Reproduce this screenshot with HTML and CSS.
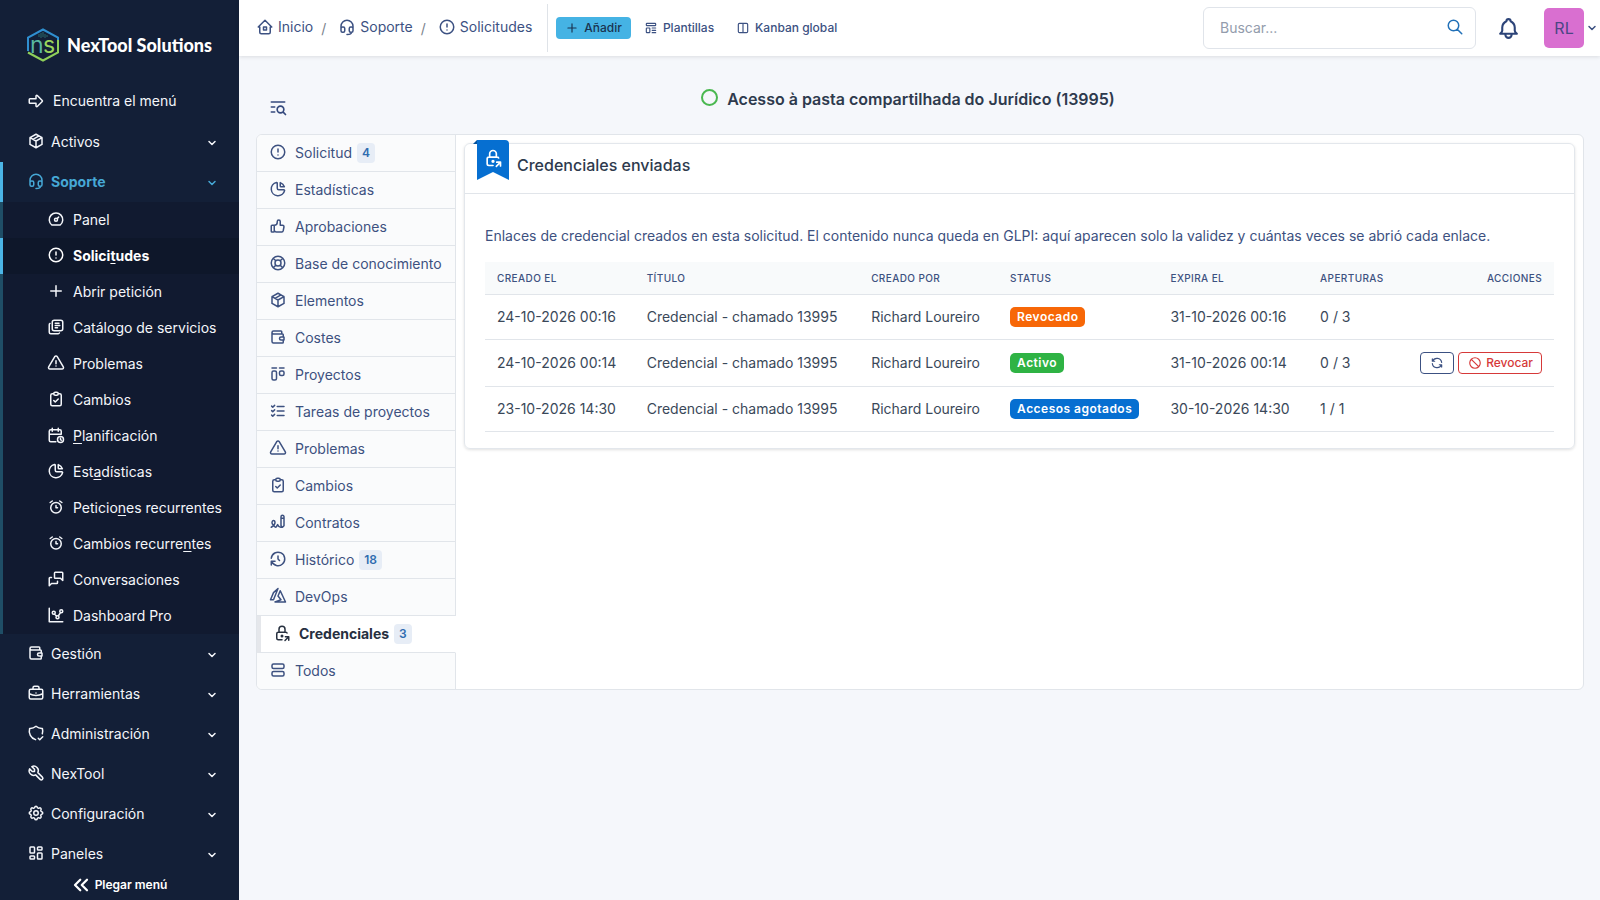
FILE: index.html
```html
<!DOCTYPE html>
<html lang="es">
<head>
<meta charset="utf-8">
<meta name="viewport" content="width=device-width, initial-scale=1">
<title>Acesso à pasta compartilhada do Jurídico (13995)</title>
<link rel="stylesheet" href="styles.css">
</head>
<body>
<svg class="sprite" aria-hidden="true">
  <symbol id="arrow" viewBox="0 0 24 24"><path d="M4 9h8v-3.586a1 1 0 0 1 1.707-.707l6.586 6.586a1 1 0 0 1 0 1.414l-6.586 6.586a1 1 0 0 1-1.707-.707v-3.586h-8a1 1 0 0 1-1-1v-4a1 1 0 0 1 1-1z"/></symbol>
  <symbol id="package" viewBox="0 0 24 24"><path d="M12 3l8 4.5v9l-8 4.5l-8-4.5v-9l8-4.5M12 12l8-4.5M12 12v9M12 12l-8-4.5M16 5.25l-8 4.5"/></symbol>
  <symbol id="headset" viewBox="0 0 24 24"><path d="M4 14v-3a8 8 0 1 1 16 0v3M18 19c0 1.657-2.686 3-6 3M4 14a2 2 0 0 1 2-2h1a2 2 0 0 1 2 2v3a2 2 0 0 1-2 2h-1a2 2 0 0 1-2-2v-3zM15 14a2 2 0 0 1 2-2h1a2 2 0 0 1 2 2v3a2 2 0 0 1-2 2h-1a2 2 0 0 1-2-2v-3z"/></symbol>
  <symbol id="gauge" viewBox="0 0 24 24"><path d="M10 13a2 2 0 1 0 4 0a2 2 0 1 0-4 0M13.45 11.55l2.05-2.05M6.4 20a9 9 0 1 1 11.2 0z"/></symbol>
  <symbol id="alert" viewBox="0 0 24 24"><path d="M3 12a9 9 0 1 0 18 0a9 9 0 0 0-18 0M12 8v4M12 16h.01"/></symbol>
  <symbol id="plus" viewBox="0 0 24 24"><path d="M12 5v14M5 12h14"/></symbol>
  <symbol id="library" viewBox="0 0 24 24"><path d="M7 5.667a2.667 2.667 0 0 1 2.667-2.667h8.666a2.667 2.667 0 0 1 2.667 2.667v8.666a2.667 2.667 0 0 1-2.667 2.667h-8.666a2.667 2.667 0 0 1-2.667-2.667zM4.012 7.26a2.005 2.005 0 0 0-1.012 1.737v10c0 1.1.9 2 2 2h10c.75 0 1.158-.385 1.5-1M11 7h5M11 10h6M11 13h3"/></symbol>
  <symbol id="triangle" viewBox="0 0 24 24"><path d="M12 9v4M10.363 3.591l-8.106 13.534a1.914 1.914 0 0 0 1.636 2.871h16.214a1.914 1.914 0 0 0 1.636-2.87l-8.106-13.536a1.914 1.914 0 0 0-3.274 0zM12 16h.01"/></symbol>
  <symbol id="clipboard" viewBox="0 0 24 24"><path d="M9 5h-2a2 2 0 0 0-2 2v12a2 2 0 0 0 2 2h10a2 2 0 0 0 2-2v-12a2 2 0 0 0-2-2h-2M9 5a2 2 0 0 1 2-2h2a2 2 0 0 1 2 2a2 2 0 0 1-2 2h-2a2 2 0 0 1-2-2zM9 14l2 2l4-4"/></symbol>
  <symbol id="calendar" viewBox="0 0 24 24"><path d="M11.795 21h-6.795a2 2 0 0 1-2-2v-12a2 2 0 0 1 2-2h12a2 2 0 0 1 2 2v4M14 18a4 4 0 1 0 8 0a4 4 0 1 0-8 0M15 3v4M7 3v4M3 11h16M18 16.496v1.504l1 1"/></symbol>
  <symbol id="pie" viewBox="0 0 24 24"><path d="M10 3.2a9 9 0 1 0 10.8 10.8a1 1 0 0 0-1-1h-6.8a2 2 0 0 1-2-2v-7a.9.9 0 0 0-1-.8M15 3.5a9 9 0 0 1 5.5 5.5h-4.5a1 1 0 0 1-1-1v-4.5"/></symbol>
  <symbol id="alarm" viewBox="0 0 24 24"><path d="M5 13a7 7 0 1 0 14 0a7 7 0 1 0-14 0M12 10v3h2M7 4l-2.75 2M17 4l2.75 2"/></symbol>
  <symbol id="messages" viewBox="0 0 24 24"><path d="M21 14l-3-3h-7a1 1 0 0 1-1-1v-6a1 1 0 0 1 1-1h9a1 1 0 0 1 1 1v10M14 15v2a1 1 0 0 1-1 1h-7l-3 3v-10a1 1 0 0 1 1-1h2"/></symbol>
  <symbol id="chart" viewBox="0 0 24 24"><path d="M3 3v18h18M7 9a2 2 0 1 0 4 0a2 2 0 1 0-4 0M17 7a2 2 0 1 0 4 0a2 2 0 1 0-4 0M12 15a2 2 0 1 0 4 0a2 2 0 1 0-4 0M10.16 10.62l2.34 2.88M15.088 13.328l2.837-4.586"/></symbol>
  <symbol id="wallet" viewBox="0 0 24 24"><path d="M17 8v-3a1 1 0 0 0-1-1h-10a2 2 0 0 0 0 4h12a1 1 0 0 1 1 1v3m0 4v3a1 1 0 0 1-1 1h-12a2 2 0 0 1-2-2v-12M20 12v4h-4a2 2 0 0 1 0-4h4"/></symbol>
  <symbol id="briefcase" viewBox="0 0 24 24"><path d="M3 9a2 2 0 0 1 2-2h14a2 2 0 0 1 2 2v9a2 2 0 0 1-2 2h-14a2 2 0 0 1-2-2zM8 7v-2a2 2 0 0 1 2-2h4a2 2 0 0 1 2 2v2M12 12v.01M3 13a20 20 0 0 0 18 0"/></symbol>
  <symbol id="shield" viewBox="0 0 24 24"><path d="M11.46 20.846a12 12 0 0 1-7.96-14.846a12 12 0 0 0 8.5-3a12 12 0 0 0 8.5 3a12 12 0 0 1-.09 7.06M15 19l2 2l4-4"/></symbol>
  <symbol id="tool" viewBox="0 0 24 24"><path d="M7 10h3v-3l-3.5-3.5a6 6 0 0 1 8 8l6 6a2 2 0 0 1-3 3l-6-6a6 6 0 0 1-8-8l3.5 3.5"/></symbol>
  <symbol id="gear" viewBox="0 0 24 24"><path d="M10.325 4.317c.426-1.756 2.924-1.756 3.35 0a1.724 1.724 0 0 0 2.573 1.066c1.543-.94 3.31.826 2.37 2.37a1.724 1.724 0 0 0 1.065 2.572c1.756.426 1.756 2.924 0 3.35a1.724 1.724 0 0 0-1.066 2.573c.94 1.543-.826 3.31-2.37 2.37a1.724 1.724 0 0 0-2.572 1.065c-.426 1.756-2.924 1.756-3.35 0a1.724 1.724 0 0 0-2.573-1.066c-1.543.94-3.31-.826-2.37-2.37a1.724 1.724 0 0 0-1.065-2.572c-1.756-.426-1.756-2.924 0-3.35a1.724 1.724 0 0 0 1.066-2.573c-.94-1.543.826-3.31 2.37-2.37c1 .608 2.296.07 2.572-1.065zM9 12a3 3 0 1 0 6 0a3 3 0 0 0-6 0"/></symbol>
  <symbol id="panels" viewBox="0 0 24 24"><path d="M5 4h4a1 1 0 0 1 1 1v6a1 1 0 0 1-1 1h-4a1 1 0 0 1-1-1v-6a1 1 0 0 1 1-1M5 16h4a1 1 0 0 1 1 1v2a1 1 0 0 1-1 1h-4a1 1 0 0 1-1-1v-2a1 1 0 0 1 1-1M15 12h4a1 1 0 0 1 1 1v6a1 1 0 0 1-1 1h-4a1 1 0 0 1-1-1v-6a1 1 0 0 1 1-1M15 4h4a1 1 0 0 1 1 1v2a1 1 0 0 1-1 1h-4a1 1 0 0 1-1-1v-2a1 1 0 0 1 1-1"/></symbol>
  <symbol id="collapse" viewBox="0 0 24 24"><path d="M11 5l-7 7l7 7M20 5l-7 7l7 7"/></symbol>
  <symbol id="down" viewBox="0 0 24 24"><path d="M6 9l6 6l6-6"/></symbol>
  <symbol id="home" viewBox="0 0 24 24"><path d="M5 12h-2l9-9l9 9h-2M5 12v7a2 2 0 0 0 2 2h10a2 2 0 0 0 2-2v-7M10 12h4v4h-4z"/></symbol>
  <symbol id="template" viewBox="0 0 24 24"><path d="M4 5a1 1 0 0 1 1-1h14a1 1 0 0 1 1 1v2a1 1 0 0 1-1 1h-14a1 1 0 0 1-1-1zM4 13a1 1 0 0 1 1-1h4a1 1 0 0 1 1 1v6a1 1 0 0 1-1 1h-4a1 1 0 0 1-1-1zM14 12h6M14 16h6M14 20h6"/></symbol>
  <symbol id="columns" viewBox="0 0 24 24"><path d="M4 6a2 2 0 0 1 2-2h12a2 2 0 0 1 2 2v12a2 2 0 0 1-2 2h-12a2 2 0 0 1-2-2zM12 4v16"/></symbol>
  <symbol id="listsearch" viewBox="0 0 24 24"><path d="M11 15a4 4 0 1 0 8 0a4 4 0 1 0-8 0M18.5 18.5l2.5 2.5M4 6h16M4 12h4M4 18h4"/></symbol>
  <symbol id="thumb" viewBox="0 0 24 24"><path d="M7 11v8a1 1 0 0 1-1 1h-2a1 1 0 0 1-1-1v-7a1 1 0 0 1 1-1h3a4 4 0 0 0 4-4v-1a2 2 0 0 1 4 0v5h3a2 2 0 0 1 2 2l-1 5a2 3 0 0 1-2 2h-7a3 3 0 0 1-3-3"/></symbol>
  <symbol id="lifebuoy" viewBox="0 0 24 24"><path d="M8 12a4 4 0 1 0 8 0a4 4 0 1 0-8 0M3 12a9 9 0 1 0 18 0a9 9 0 1 0-18 0M15 15l3.35 3.35M9 15l-3.35 3.35M5.65 5.65l3.35 3.35M18.35 5.65l-3.35 3.35"/></symbol>
  <symbol id="kanban" viewBox="0 0 24 24"><path d="M4 4h6M14 4h6M4 10a2 2 0 0 1 2-2h2a2 2 0 0 1 2 2v8a2 2 0 0 1-2 2h-2a2 2 0 0 1-2-2zM14 10a2 2 0 0 1 2-2h2a2 2 0 0 1 2 2v2a2 2 0 0 1-2 2h-2a2 2 0 0 1-2-2z"/></symbol>
  <symbol id="listcheck" viewBox="0 0 24 24"><path d="M3.5 5.5l1.5 1.5l2.5-2.5M3.5 11.5l1.5 1.5l2.5-2.5M3.5 17.5l1.5 1.5l2.5-2.5M11 6h9M11 12h9M11 18h9"/></symbol>
  <symbol id="sign" viewBox="0 0 24 24"><path d="M3 19c3.333-2 5-4 5-6c0-3-1-3-2-3s-2.032 1.085-2 3c.034 2.048 1.658 2.877 2.5 4c1.5 2 2.5 2.5 3.5 1c.667-1 1.167-1.833 1.5-2.5c1 2.333 2.333 3.5 4 3.5h2.5M20 17v-12c0-1.121-.879-2-2-2s-2 .879-2 2v12l2 2l2-2zM16 7h4"/></symbol>
  <symbol id="history" viewBox="0 0 24 24"><path d="M12 8v4l2 2M3.05 11a9 9 0 1 1 .5 4m-.5 5v-5h5"/></symbol>
  <symbol id="azure" viewBox="0 0 24 24"><path d="M6 7.5l-4 9.5h4l6-15zM22 20l-7-15l-3 7l4 5l-8 3z"/></symbol>
  <symbol id="lockshare" viewBox="0 0 24 24"><path d="M12 21h-5a2 2 0 0 1-2-2v-6a2 2 0 0 1 2-2h10c.7 0 1.4.4 1.7 1M8 11v-4a4 4 0 1 1 8 0v4M11 16a1 1 0 1 0 2 0a1 1 0 1 0-2 0M16 22l5-5M21 21.5v-4.5h-4.5"/></symbol>
  <symbol id="rows" viewBox="0 0 24 24"><path d="M4 6a2 2 0 0 1 2-2h12a2 2 0 0 1 2 2v2a2 2 0 0 1-2 2h-12a2 2 0 0 1-2-2zM4 16a2 2 0 0 1 2-2h12a2 2 0 0 1 2 2v2a2 2 0 0 1-2 2h-12a2 2 0 0 1-2-2z"/></symbol>
  <symbol id="search" viewBox="0 0 24 24"><path d="M3 10a7 7 0 1 0 14 0a7 7 0 1 0-14 0M21 21l-6-6"/></symbol>
  <symbol id="bell" viewBox="0 0 24 24"><path d="M10 5a2 2 0 1 1 4 0a7 7 0 0 1 4 6v3a4 4 0 0 0 2 3h-16a4 4 0 0 0 2-3v-3a7 7 0 0 1 4-6M9 17v1a3 3 0 0 0 6 0v-1"/></symbol>
  <symbol id="refresh" viewBox="0 0 24 24"><path d="M20 11a8.1 8.1 0 0 0-15.5-2m-.5-4v4h4M4 13a8.1 8.1 0 0 0 15.5 2m.5 4v-4h-4"/></symbol>
  <symbol id="ban" viewBox="0 0 24 24"><path d="M3 12a9 9 0 1 0 18 0a9 9 0 1 0-18 0M5.7 5.7l12.6 12.6"/></symbol>
</svg>
<div class="app">
  <aside class="sidebar">
    <a class="brand" href="#">
      <svg class="brand-mark" viewBox="0 0 34 34" aria-hidden="true">
        <path class="hex-top" d="M2 23V9.500L17 1.500L32 9.500V12"/>
        <path class="hex-bottom" d="M2 24.500L17 32.500L32 24.500V12"/>
        <path class="circuit" d="M13 9V6M15 10V5M17 9V4M19 10V6M21 9V7"/>
        <text class="brand-n" x="4" y="25">n</text><text class="brand-s" x="17" y="25">s</text>
      </svg>
      <span class="brand-name">NexTool Solutions</span>
    </a>
    <button class="find" type="button"><svg class="icon"><use href="#arrow"/></svg>Encuentra el menú</button>
    <nav class="menu">
      <button class="menu-item" type="button"><svg class="icon"><use href="#package"/></svg><span>Activos</span><svg class="caret"><use href="#down"/></svg></button>
      <button class="menu-item open" type="button"><svg class="icon"><use href="#headset"/></svg><span>Soporte</span><svg class="caret"><use href="#down"/></svg></button>
      <div class="submenu">
        <a href="#"><svg class="icon"><use href="#gauge"/></svg><span>Panel</span></a>
        <a class="current" href="#"><svg class="icon"><use href="#alert"/></svg><span>Solici<u>t</u>udes</span></a>
        <a href="#"><svg class="icon"><use href="#plus"/></svg><span>Abrir petición</span></a>
        <a href="#"><svg class="icon"><use href="#library"/></svg><span>Catálogo de servicios</span></a>
        <a href="#"><svg class="icon"><use href="#triangle"/></svg><span>Problemas</span></a>
        <a href="#"><svg class="icon"><use href="#clipboard"/></svg><span>Cambios</span></a>
        <a href="#"><svg class="icon"><use href="#calendar"/></svg><span><u>P</u>lanificación</span></a>
        <a href="#"><svg class="icon"><use href="#pie"/></svg><span>Est<u>a</u>dísticas</span></a>
        <a href="#"><svg class="icon"><use href="#alarm"/></svg><span>Peticio<u>n</u>es recurrentes</span></a>
        <a href="#"><svg class="icon"><use href="#alarm"/></svg><span>Cambios recurre<u>n</u>tes</span></a>
        <a href="#"><svg class="icon"><use href="#messages"/></svg><span>Conversaciones</span></a>
        <a href="#"><svg class="icon"><use href="#chart"/></svg><span>Dashboard Pro</span></a>
      </div>
      <button class="menu-item" type="button"><svg class="icon"><use href="#wallet"/></svg><span>Gestión</span><svg class="caret"><use href="#down"/></svg></button>
      <button class="menu-item" type="button"><svg class="icon"><use href="#briefcase"/></svg><span>Herramientas</span><svg class="caret"><use href="#down"/></svg></button>
      <button class="menu-item" type="button"><svg class="icon"><use href="#shield"/></svg><span>Administración</span><svg class="caret"><use href="#down"/></svg></button>
      <button class="menu-item" type="button"><svg class="icon"><use href="#tool"/></svg><span>NexTool</span><svg class="caret"><use href="#down"/></svg></button>
      <button class="menu-item" type="button"><svg class="icon"><use href="#gear"/></svg><span>Configuración</span><svg class="caret"><use href="#down"/></svg></button>
      <button class="menu-item" type="button"><svg class="icon"><use href="#panels"/></svg><span>Paneles</span><svg class="caret"><use href="#down"/></svg></button>
    </nav>
    <button class="fold" type="button"><svg class="icon"><use href="#collapse"/></svg>Plegar menú</button>
  </aside>

  <div class="page">
    <header class="topbar">
      <nav class="crumbs" aria-label="Ruta">
        <a href="#"><svg class="icon"><use href="#home"/></svg>Inicio</a><span class="slash">/</span>
        <a href="#"><svg class="icon"><use href="#headset"/></svg>Soporte</a><span class="slash">/</span>
        <a href="#"><svg class="icon"><use href="#alert"/></svg>Solicitudes</a>
      </nav>
      <div class="actions">
        <a class="action primary" href="#"><svg class="icon small"><use href="#plus"/></svg>Añadir</a>
        <a class="action" href="#"><svg class="icon small"><use href="#template"/></svg>Plantillas</a>
        <a class="action" href="#"><svg class="icon small"><use href="#columns"/></svg>Kanban global</a>
      </div>
      <form class="search">
        <input type="search" placeholder="Buscar..." aria-label="Buscar">
        <button type="button" aria-label="Buscar"><svg class="icon"><use href="#search"/></svg></button>
      </form>
      <button class="bell" type="button" aria-label="Notificaciones"><svg class="icon"><use href="#bell"/></svg></button>
      <button class="user" type="button"><span class="avatar">RL</span><svg class="caret"><use href="#down"/></svg></button>
    </header>

    <main class="content">
      <div class="heading">
        <button class="list-toggle" type="button" aria-label="Mostrar lista"><svg class="icon"><use href="#listsearch"/></svg></button>
        <h1><span class="status-dot"></span>Acesso à pasta compartilhada do Jurídico (13995)</h1>
      </div>
      <div class="panel">
        <nav class="tabs">
          <a href="#"><svg class="icon"><use href="#alert"/></svg>Solicitud<span class="count">4</span></a>
          <a href="#"><svg class="icon"><use href="#pie"/></svg>Estadísticas</a>
          <a href="#"><svg class="icon"><use href="#thumb"/></svg>Aprobaciones</a>
          <a href="#"><svg class="icon"><use href="#lifebuoy"/></svg>Base de conocimiento</a>
          <a href="#"><svg class="icon"><use href="#package"/></svg>Elementos</a>
          <a href="#"><svg class="icon"><use href="#wallet"/></svg>Costes</a>
          <a href="#"><svg class="icon"><use href="#kanban"/></svg>Proyectos</a>
          <a href="#"><svg class="icon"><use href="#listcheck"/></svg>Tareas de proyectos</a>
          <a href="#"><svg class="icon"><use href="#triangle"/></svg>Problemas</a>
          <a href="#"><svg class="icon"><use href="#clipboard"/></svg>Cambios</a>
          <a href="#"><svg class="icon"><use href="#sign"/></svg>Contratos</a>
          <a href="#"><svg class="icon"><use href="#history"/></svg>Histórico<span class="count">18</span></a>
          <a href="#"><svg class="icon"><use href="#azure"/></svg>DevOps</a>
          <a class="current" href="#"><svg class="icon"><use href="#lockshare"/></svg>Credenciales<span class="count">3</span></a>
          <a href="#"><svg class="icon"><use href="#rows"/></svg>Todos</a>
        </nav>
        <div class="tab-body">
          <section class="card">
            <div class="ribbon"><svg class="icon"><use href="#lockshare"/></svg></div>
            <h2>Credenciales enviadas</h2>
            <div class="card-body">
              <p>Enlaces de credencial creados en esta solicitud. El contenido nunca queda en GLPI: aquí aparecen solo la validez y cuántas veces se abrió cada enlace.</p>
              <table>
                <colgroup><col class="c-date"><col class="c-title"><col class="c-author"><col class="c-status"><col class="c-date"><col class="c-opens"><col></colgroup>
                <thead>
                  <tr><th>Creado el</th><th>Título</th><th>Creado por</th><th>Status</th><th>Expira el</th><th>Aperturas</th><th class="end">Acciones</th></tr>
                </thead>
                <tbody>
                  <tr><td>24-10-2026 00:16</td><td>Credencial - chamado 13995</td><td>Richard Loureiro</td><td><span class="badge orange">Revocado</span></td><td>31-10-2026 00:16</td><td>0 / 3</td><td></td></tr>
                  <tr><td>24-10-2026 00:14</td><td>Credencial - chamado 13995</td><td>Richard Loureiro</td><td><span class="badge green">Activo</span></td><td>31-10-2026 00:14</td><td>0 / 3</td>
                    <td><div class="row-actions"><button class="btn" type="button" aria-label="Renovar"><svg class="icon small"><use href="#refresh"/></svg></button><button class="btn danger" type="button"><svg class="icon small"><use href="#ban"/></svg>Revocar</button></div></td></tr>
                  <tr><td>23-10-2026 14:30</td><td>Credencial - chamado 13995</td><td>Richard Loureiro</td><td><span class="badge blue">Accesos agotados</span></td><td>30-10-2026 14:30</td><td>1 / 1</td><td></td></tr>
                </tbody>
              </table>
            </div>
          </section>
        </div>
      </div>
    </main>
  </div>
</div>
</body>
</html>
```
FILE: styles.css
```css
* { box-sizing: border-box; }
body {
  margin: 0;
  background: #f5f7fb;
  color: #3a4859;
  font: 400 14px/20px Inter, "Liberation Sans", sans-serif;
}
a { color: inherit; text-decoration: none; }
button { margin: 0; padding: 0; border: 0; background: none; color: inherit; font: inherit; cursor: pointer; }
h1, h2, p { margin: 0; }
.sprite { display: none; }
.icon, .caret {
  flex: none;
  width: 18px;
  height: 18px;
  fill: none;
  stroke: currentColor;
  stroke-width: 2;
  stroke-linecap: round;
  stroke-linejoin: round;
}
.icon.small { width: 14px; height: 14px; }
.caret { width: 12px; height: 12px; stroke-width: 3; }

.app { display: flex; min-height: 100vh; }

.sidebar {
  flex: none;
  display: flex;
  flex-direction: column;
  width: 239px;
  background: #131f37;
  color: #f4f6fa;
}
.brand { display: flex; align-items: center; gap: 7px; padding: 28px 0 0 26px; }
.brand-mark { width: 34px; height: 34px; fill: none; stroke-width: 2; }
.hex-top { stroke: #2f8fd0; }
.hex-bottom { stroke: #8fd05a; }
.circuit { stroke: #2b6a6c; stroke-width: 1; }
.brand-mark text { font: 400 23px Inter, sans-serif; }
.brand-n { fill: #58b8a0; }
.brand-s { fill: #9bd65c; }
.brand-name { color: #fff; font: 900 18px/24px Lato, sans-serif; white-space: nowrap; }
.find { display: flex; align-items: center; gap: 8px; height: 38px; margin: 20px 0 2px; padding-left: 27px; }
.menu .icon { margin-bottom: 2px; }
.menu-item { display: flex; align-items: center; gap: 6px; width: 100%; height: 40px; padding: 0 21px 0 27px; text-align: left; }
.menu-item span { flex: 1; }
.menu-item .caret { margin-top: 2px; }
.menu-item.open { border-left: 3px solid #4bb5e6; padding-left: 24px; color: #46a8d6; font-weight: 700; }
.submenu { background: #111a30; }
.submenu a { display: flex; align-items: center; gap: 8px; height: 36px; padding-left: 44px; border-left: 3px solid #1f4e66; white-space: nowrap; }
.submenu .current { border-left-color: #4bb5e6; background: #0e172a; color: #fff; font-weight: 700; }
u { text-underline-offset: 2px; }
.fold { display: flex; align-items: center; justify-content: center; gap: 5px; height: 22px; color: #fff; font-size: 12px; font-weight: 600; }
.fold .icon { stroke-width: 3; }

.page { flex: 1; min-width: 0; }
.topbar {
  display: flex;
  align-items: center;
  height: 56px;
  padding: 0 2px 0 17px;
  background: #fff;
  box-shadow: 0 1px 4px #0000001c;
  color: #3c5182;
}
.crumbs { display: flex; align-items: center; white-space: nowrap; }
.crumbs a { display: flex; align-items: center; gap: 4px; padding-bottom: 2px; }
.slash { padding: 2px 12px 0 8px; color: #7b828c; }
.actions { display: flex; align-items: center; gap: 4px; height: 48px; margin-left: 15px; padding-left: 8px; border-left: 1px solid #dfe3e8; }
.action { display: flex; align-items: center; gap: 5px; height: 22px; padding: 0 9px; border-radius: 4px; font-size: 12px; font-weight: 500; white-space: nowrap; }
.action.primary { background: #45b3e4; color: #1a3350; }
.search { display: flex; align-items: center; width: 273px; height: 42px; margin-left: auto; padding: 0 11px 0 16px; border: 1px solid #e0e4ea; border-radius: 6px; }
.search input { flex: 1; min-width: 0; padding: 0; border: 0; outline: 0; background: none; color: inherit; font: inherit; }
.search input::placeholder { color: #939cac; }
.search button { display: flex; padding-bottom: 2px; color: #2271b8; }
.bell { display: flex; margin: 0 23px 0 20px; color: #2c4478; }
.bell .icon { width: 25px; height: 25px; }
.user { display: flex; align-items: center; gap: 2px; }
.avatar { display: grid; place-items: center; width: 40px; height: 40px; border-radius: 5px; background: #d96fd0; color: #4b4684; font-size: 16px; }

.content { padding: 16px 16px 24px 17px; }
.heading { display: flex; align-items: center; height: 62px; padding: 0 56px 8px 12px; }
.list-toggle { display: flex; padding-top: 16px; color: #34497d; }
.list-toggle .icon { width: 20px; height: 20px; }
.heading h1 { flex: 1; display: flex; align-items: center; justify-content: center; gap: 9px; color: #2e3a4d; font-size: 16px; line-height: 24px; font-weight: 600; }
.status-dot { width: 17px; height: 17px; margin-bottom: 4px; border: 2px solid #4ab850; border-radius: 50%; }

.panel { display: flex; border: 1px solid #e1e5ea; border-radius: 6px; background: #fff; overflow: hidden; }
.tabs { flex: none; width: 199px; background: #fafbfc; color: #3d5180; }
.tabs a { display: flex; align-items: center; gap: 8px; height: 37px; padding-left: 12px; border-right: 1px solid #e1e5ea; border-bottom: 1px solid #e1e5ea; white-space: nowrap; }
.tabs .icon { margin-bottom: 2px; }
.tabs a:last-child { height: 36px; border-bottom: 0; }
.tabs .current { padding-left: 12px; border-left: 4px solid #e5e7eb; border-right-color: #fff; background: #fff; color: #27303f; font-weight: 700; }
.count { display: grid; place-items: center; height: 20px; margin-left: -3px; padding: 0 5px; border-radius: 4px; background: #e7edf6; color: #2f6cb0; font-size: 12px; font-weight: 600; }
.tab-body { flex: 1; min-width: 0; padding: 8px; }

.card { position: relative; border: 1px solid #e3e7ec; border-radius: 6px; box-shadow: 0 1px 3px #0000001f; }
.card::before {
  content: "";
  position: absolute;
  top: -4px;
  left: 8px;
  border-right: 4px solid #04539d;
  border-top: 4px solid transparent;
}
.card h2 { padding: 9px 52px 16px; border-bottom: 1px solid #e1e5ea; color: #2e3a4d; font-size: 16px; line-height: 24px; font-weight: 500; }
.ribbon {
  position: absolute;
  top: -4px;
  left: 12px;
  display: flex;
  justify-content: center;
  width: 32px;
  height: 40px;
  padding-top: 8px;
  background: #066fd1;
  border-radius: 0 4px 0 0;
  clip-path: polygon(0 0, 100% 0, 100% 100%, 50% 80%, 0 100%);
  color: #fff;
}
.ribbon .icon { width: 20px; height: 20px; }
.card-body { padding: 32px 20px 16px; }
.card-body p { color: #3d5180; }
table { width: 100%; margin-top: 16px; border-collapse: collapse; }
.c-date { width: 14%; }
.c-title { width: 21%; }
.c-author { width: 13%; }
.c-status { width: 15%; }
.c-opens { width: 9%; }
th, td { padding: 0 12px; border-bottom: 1px solid #e1e5ea; text-align: left; white-space: nowrap; }
th { height: 32px; background: #f8fafb; color: #3d5180; font-size: 10px; line-height: 16px; font-weight: 500; letter-spacing: .04em; text-transform: uppercase; }
th.end { text-align: right; }
td { height: 45px; padding-top: 12px; padding-bottom: 12px; }
.badge { display: inline-block; padding: 0 7px; border-radius: 5px; color: #fff; font-size: 12px; line-height: 20px; font-weight: 600; letter-spacing: .04em; vertical-align: top; }
.orange { background: #f76707; }
.green { background: #2fb344; }
.blue { background: #066fd1; }
.row-actions { display: flex; align-items: center; justify-content: flex-end; gap: 4px; }
.btn { display: flex; align-items: center; gap: 4px; height: 22px; padding: 0 9px; border: 1px solid #3c5182; border-radius: 4px; color: #3c5182; font-size: 12px; font-weight: 500; }
.btn.danger { padding: 0 8px 0 9px; border-color: #d63939; color: #d63939; }
```
